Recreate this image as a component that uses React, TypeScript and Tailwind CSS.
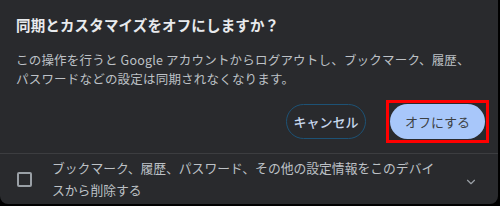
import { ChevronDown } from 'lucide-react';

const FONT = '"Noto Sans CJK JP", "Noto Sans", sans-serif';

export default function App() {
  return (
    <div className="h-[206px] w-[500px] bg-black" style={{ fontFamily: FONT }}>
      <div className="flex h-[204px] w-[498px] flex-col overflow-hidden rounded-b-lg bg-[#292a2d]">
        <div className="px-4 pt-[15px]">
          <h1 className="text-[14.5px] font-bold leading-[20px] tracking-[0.15px] text-[#e8eaed]">
            同期とカスタマイズをオフにしますか？
          </h1>
          <p className="mt-[16px] text-[12.5px] leading-[18.5px] tracking-[0.2px] text-[#bdc1c6]">
            この操作を行うと Google アカウントからログアウトし、ブックマーク、履歴、
            <br />
            パスワードなどの設定は同期されなくなります。
          </p>
        </div>

        <div className="mt-[16px] flex justify-end gap-[24px] pr-[13px]">
          <button className="h-[35px] w-[80px] rounded-full border border-[#1d5275] text-[13px] font-medium text-[#c8d8ee]">
            キャンセル
          </button>
          <div className="-m-[4px] border-[3px] border-[#ff0000] p-[1px]">
            <button className="block h-[35px] w-[95px] rounded-full bg-[#a8c7fa] text-[13px] text-[#3c4043]">
              オフにする
            </button>
          </div>
        </div>

        <div className="mt-[14px] h-px bg-[#3c3d40]" />

        <div className="flex flex-1 items-center pl-[17px] pr-[20px]">
          <div className="h-[15px] w-[15px] rounded-[2px] border-2 border-[#9aa0a6]" />
          <p className="ml-[20px] flex-1 text-[12.8px] leading-[22px] text-[#bdc1c6]">
            ブックマーク、履歴、パスワード、その他の設定情報をこのデバイ
            <br />
            スから削除する
          </p>
          <ChevronDown className="mt-[6px] h-[14px] w-[14px] text-[#9aa0a6]" strokeWidth={2} />
        </div>
      </div>
    </div>
  );
}
